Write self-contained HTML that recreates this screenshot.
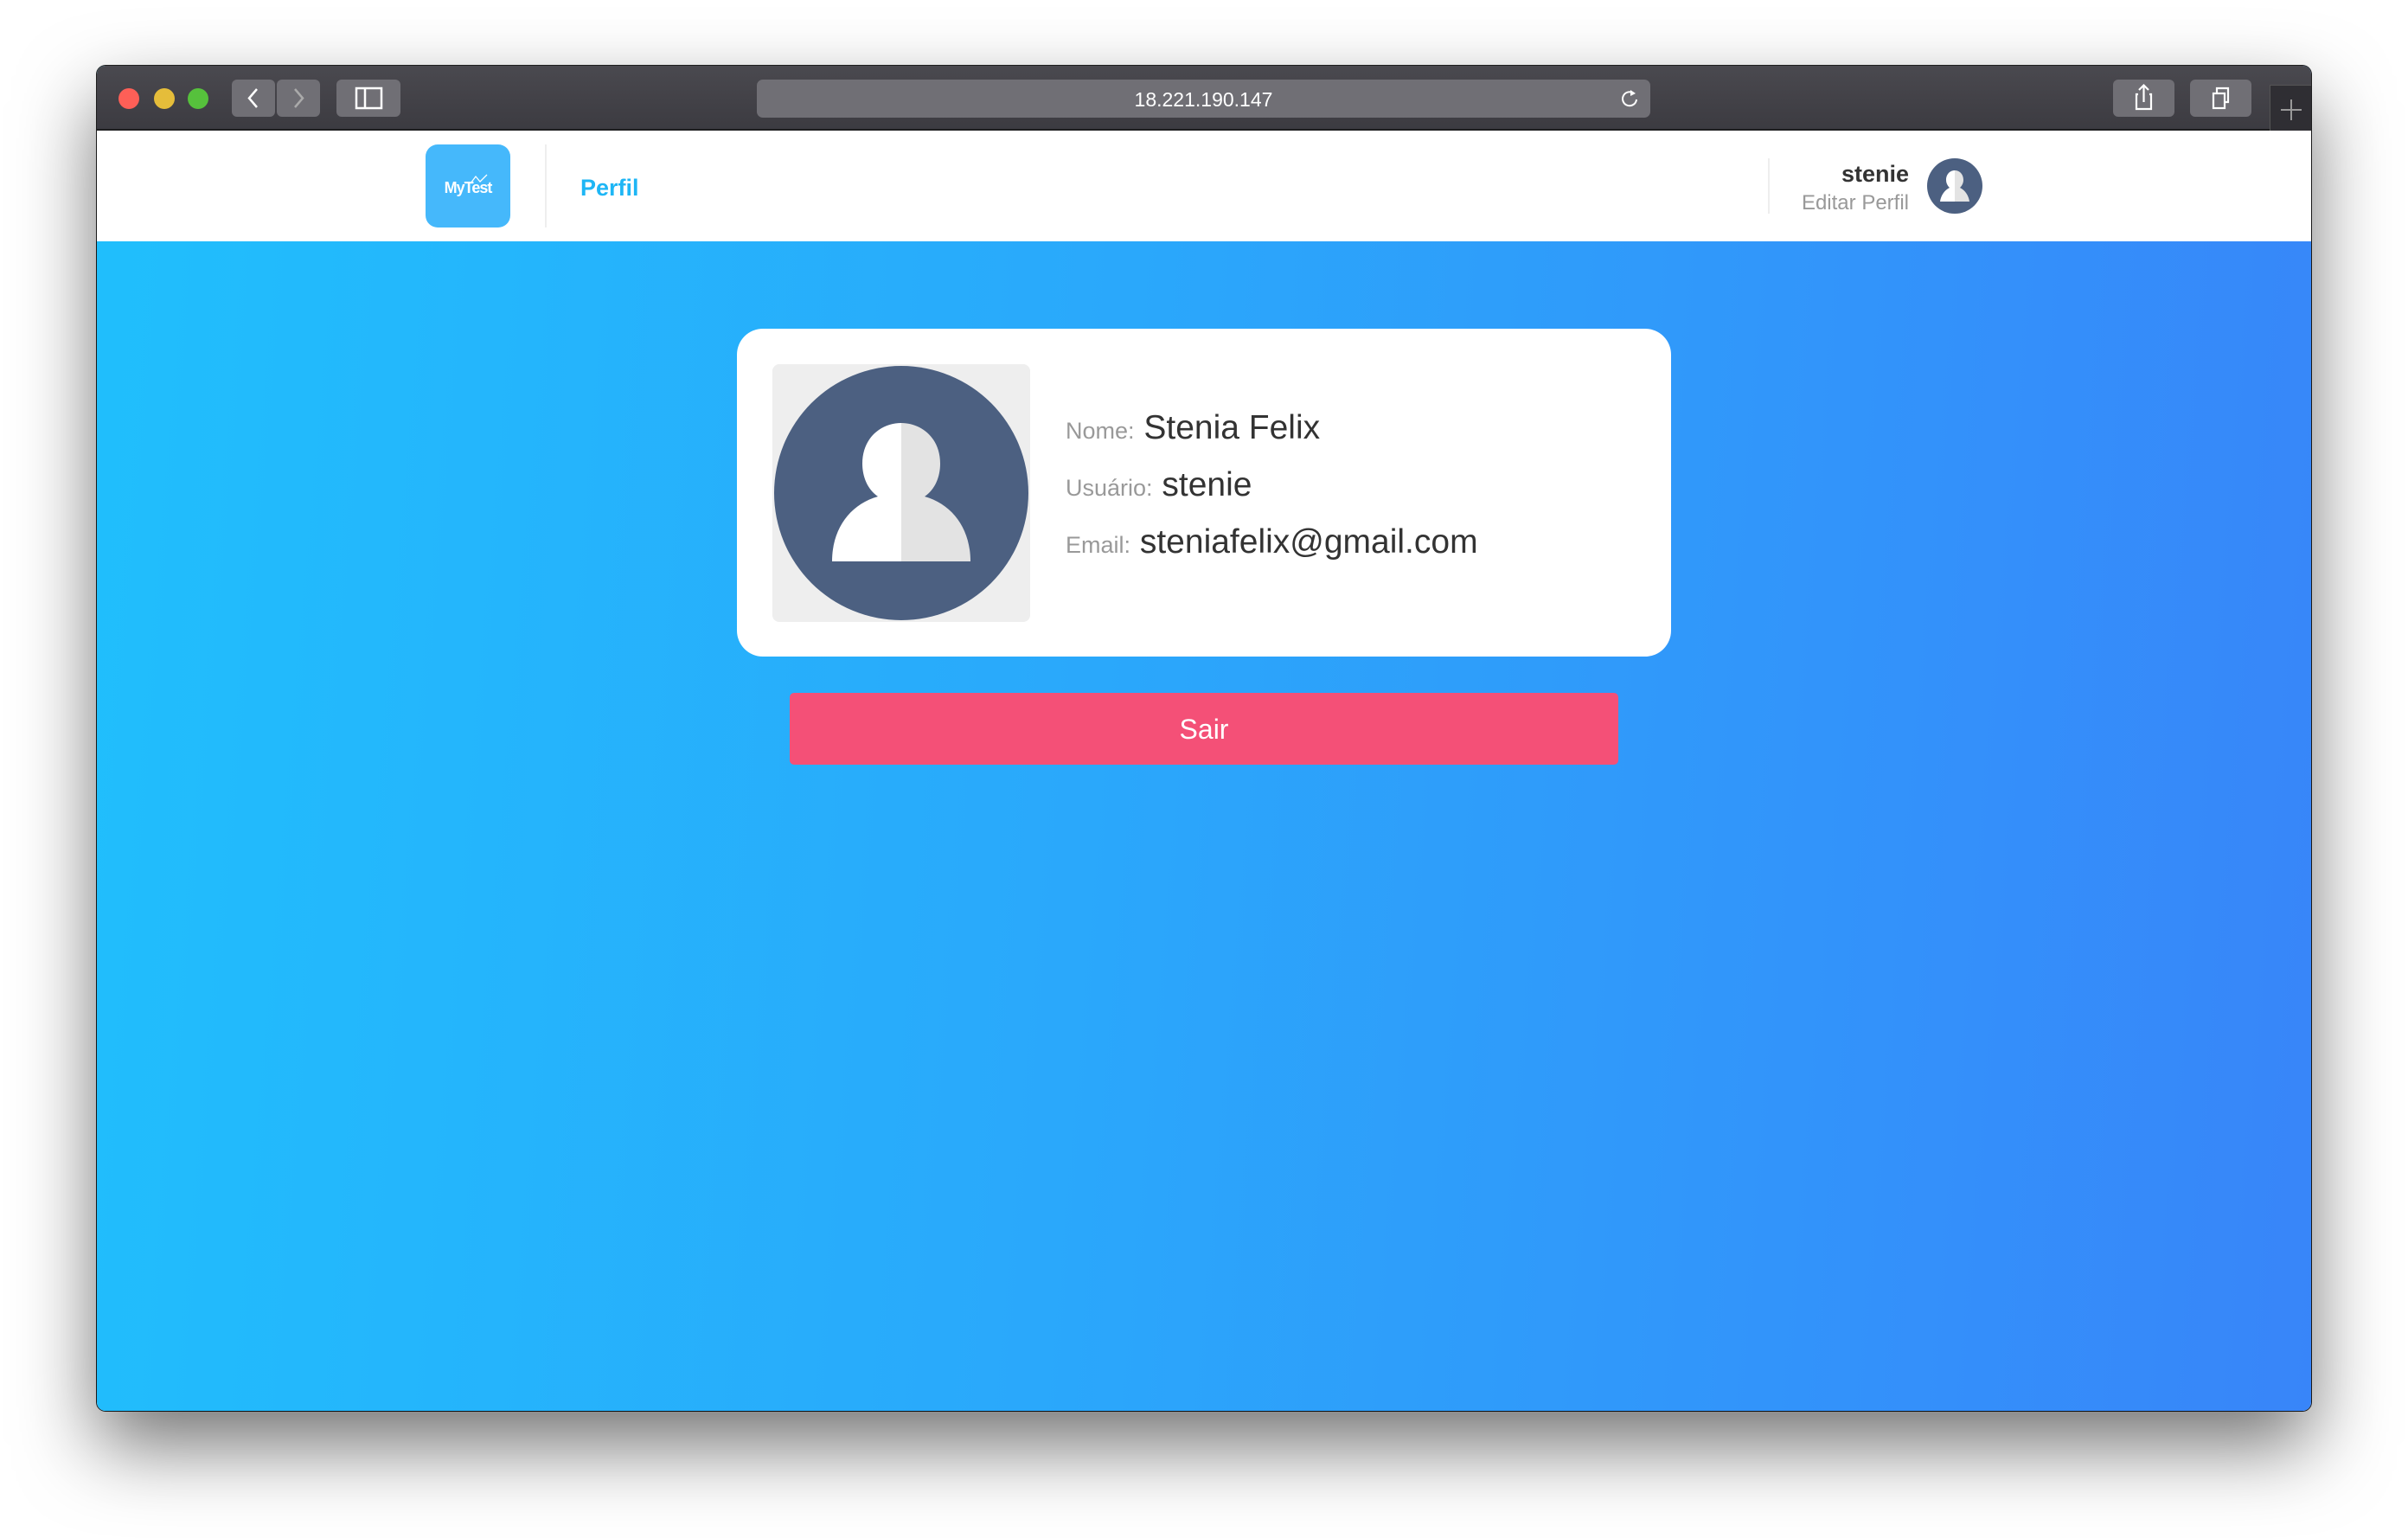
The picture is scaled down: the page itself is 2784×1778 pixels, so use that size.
<!DOCTYPE html>
<html><head><meta charset="utf-8"><style>
*{margin:0;padding:0;box-sizing:border-box}
body{width:2784px;height:1778px;background:#fff;position:relative;overflow:hidden;font-family:"Liberation Sans",sans-serif}
.win{position:absolute;left:112px;top:76px;width:2560px;height:1555px;border-radius:10px;overflow:hidden;box-shadow:0 40px 90px rgba(0,0,0,.55),0 0 0 1px #222;background:linear-gradient(95deg,#20bffc 0%,#2aa8fb 45%,#3885f9 100%)}
.tb{position:absolute;left:0;top:0;width:100%;height:75px;background:linear-gradient(#4a494f,#3c3b41);border-bottom:2px solid #1e1e20}
.dot{position:absolute;top:26px;width:24px;height:24px;border-radius:50%}
.btn{position:absolute;top:16px;height:43px;background:#706f75;border-radius:6px}
.url{position:absolute;left:763px;top:16px;width:1033px;height:44px;background:#706f75;border-radius:7px;color:#fff;font-size:23px;text-align:center;line-height:46px}
.nav{position:absolute;left:0;top:75px;width:100%;height:128px;background:#fff}
.card{position:absolute;left:740px;top:304px;width:1080px;height:379px;background:#fff;border-radius:30px}
.abox{position:absolute;left:41px;top:41px;width:298px;height:298px;background:#eee;border-radius:8px}
.info{position:absolute;left:380px;color:#333;font-size:39px;white-space:nowrap}
.info span{color:#999;font-size:27px}
.sair{position:absolute;left:801px;top:725px;width:958px;height:83px;background:#f45077;border-radius:5px;color:#fff;font-size:32px;text-align:center;line-height:85px}
</style></head><body>
<div class="win">
<div class="tb">
<div class="dot" style="left:25px;background:#fe5f57"></div>
<div class="dot" style="left:66px;background:#e5bd3a"></div>
<div class="dot" style="left:105px;background:#56c13c"></div>
<div class="btn" style="left:156px;width:50px"><svg width="50" height="43"><path d="M29 11 L20 21.5 L29 32" stroke="#fff" stroke-width="2.5" fill="none"/></svg></div>
<div class="btn" style="left:208px;width:50px"><svg width="50" height="43"><path d="M21 11 L30 21.5 L21 32" stroke="#aaa" stroke-width="2.5" fill="none"/></svg></div>
<div class="btn" style="left:277px;width:74px"><svg width="74" height="43"><rect x="23" y="10" width="29" height="23" stroke="#fff" stroke-width="2.5" fill="none"/><line x1="33" y1="10" x2="33" y2="33" stroke="#fff" stroke-width="2.5"/></svg></div>
<div class="url">18.221.190.147<svg style="position:absolute;right:12px;top:10px" width="24" height="24"><path d="M17 6 A8 8 0 1 0 20 13" stroke="#fff" stroke-width="2" fill="none"/><path d="M13 2 L19 6 L13 9Z" fill="#fff"/></svg></div>
<div class="btn" style="left:2331px;width:71px"><svg width="71" height="43"><path d="M29 17 H27 V34 H44 V17 H42 M35.5 26 V7 M30 12 L35.5 6.5 L41 12" stroke="#fff" stroke-width="2.2" fill="none"/></svg></div>
<div class="btn" style="left:2420px;width:71px"><svg width="71" height="43"><rect x="27" y="16" width="13" height="17" stroke="#fff" stroke-width="2.2" fill="none"/><path d="M31 15 V10 H44 V26 H41" stroke="#fff" stroke-width="2.2" fill="none"/></svg></div>
<div style="position:absolute;left:2512px;top:22px;width:48px;height:54px;background:#2f2e33;border-left:1px solid #555;border-top:1px solid #555"><svg width="48" height="54"><path d="M24 16 V40 M12 28 H36" stroke="#999" stroke-width="2"/></svg></div>
</div>
<div class="nav">
<div style="position:absolute;left:380px;top:16px;width:98px;height:96px;background:#45b8fb;border-radius:14px;color:#fff;font-weight:bold;font-size:18px;text-align:center;line-height:100px;letter-spacing:-1px">MyTest<svg style="position:absolute;left:50px;top:33px" width="24" height="14"><path d="M2 12 L8 4 L13 10 L21 2" stroke="#fff" stroke-width="1.3" fill="none"/></svg></div>
<div style="position:absolute;left:518px;top:16px;width:2px;height:96px;background:#eee"></div>
<div style="position:absolute;left:559px;top:51px;color:#1eb6f5;font-weight:bold;font-size:27px">Perfil</div>
<div style="position:absolute;left:1932px;top:32px;width:2px;height:64px;background:#eee"></div>
<div style="position:absolute;right:465px;top:35px;text-align:right;color:#333;font-weight:bold;font-size:27px">stenie</div>
<div style="position:absolute;right:465px;top:70px;text-align:right;color:#999;font-size:24px">Editar Perfil</div>
<svg style="position:absolute;left:2116px;top:32px" width="64" height="64"><circle cx="32" cy="32" r="32" fill="#4c6081"/><path d="M32 14 C26 14 22 19 22 25 C22 29 24 32 26 34 C20 37 16 43 15 50 H32Z" fill="#fff"/><path d="M32 14 C38 14 42 19 42 25 C42 29 40 32 38 34 C44 37 48 43 49 50 H32Z" fill="#e3e3e3"/></svg>
</div>
<div class="card">
<div class="abox"><svg width="298" height="298"><circle cx="149" cy="149" r="147" fill="#4c6081"/><path d="M149 68 C127 68 104 84 104 115 C104 130 110 145 122 153 C90 162 69 190 69 228 H149Z" fill="#fff"/><path d="M149 68 C171 68 194 84 194 115 C194 130 188 145 176 153 C208 162 229 190 229 228 H149Z" fill="#e3e3e3"/></svg></div>
<div class="info" style="top:93px"><span>Nome:</span> Stenia Felix</div>
<div class="info" style="top:159px"><span>Usuário:</span> stenie</div>
<div class="info" style="top:225px"><span>Email:</span> steniafelix@gmail.com</div>
</div>
<div class="sair">Sair</div>
</div>
</body></html>
